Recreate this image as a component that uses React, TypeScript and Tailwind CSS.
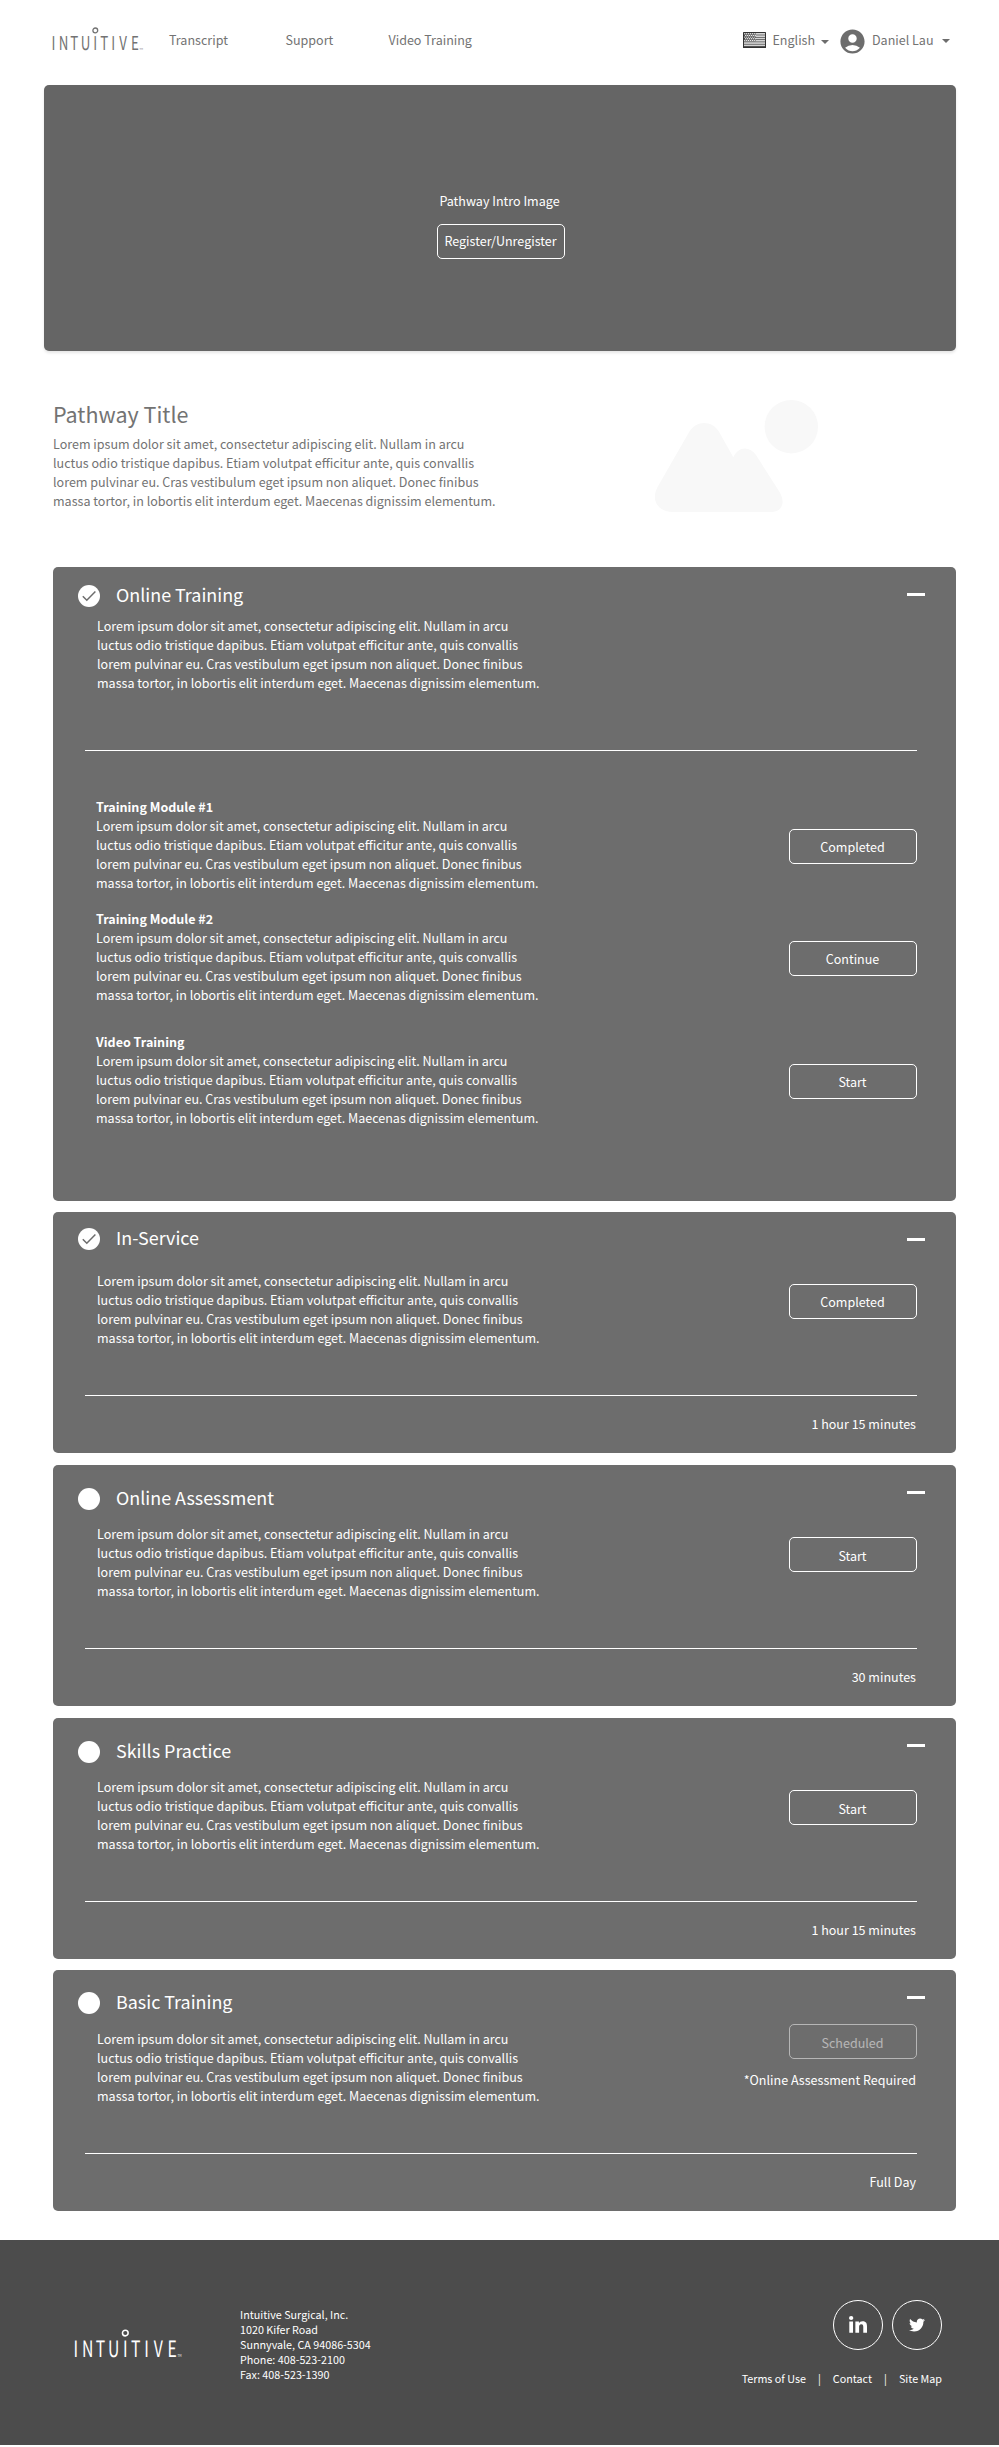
import type { ReactNode } from 'react';
import { FaLinkedinIn, FaTwitter } from 'react-icons/fa';
import { MdAccountCircle } from 'react-icons/md';

const LOGO_LETTERS: [string, number][] = [
  ['I', 1.5],
  ['N', 11.5],
  ['T', 22.2],
  ['U', 33.5],
  ['I', 43.2],
  ['T', 52.2],
  ['I', 61.2],
  ['V', 71.2],
  ['E', 82.9],
];

function Logo({ className }: { className: string }) {
  return (
    <svg viewBox="0 0 92 24" className={className} fill="currentColor" overflow="visible">
      <circle cx="43.3" cy="3.4" r="2.4" fill="none" stroke="currentColor" strokeWidth="1.3" />
      {LOGO_LETTERS.map(([letter, x], i) => (
        <text
          key={i}
          transform={`translate(${x} 23.4) scale(0.7 1)`}
          textAnchor="middle"
          fontSize="19"
          className="font-normal"
          textRendering="geometricPrecision"
        >
          {letter}
        </text>
      ))}
      <text x="89.2" y="23.4" textAnchor="middle" fontSize="2.4">
        TM
      </text>
    </svg>
  );
}

function Flag() {
  return (
    <svg viewBox="0 0 23 16" className="h-4 w-[23px]">
      <rect width="23" height="16" rx="0.6" fill="#333333" />
      {[1, 3.3, 5.6, 7.9, 10.2, 12.5].map((y) => (
        <rect key={y} x="1" y={y} width="21" height="1.7" fill="#d4d4d4" />
      ))}
      <rect x="1" y="1" width="11.5" height="8.2" fill="#4a4a4a" />
      {[0, 1, 2, 3, 4].map((row) =>
        [0, 1, 2, 3, 4, 5].map((col) => (
          <circle
            key={`${row}-${col}`}
            cx={1.8 + col * 1.9 + (row % 2) * 0.95}
            cy={1.8 + row * 1.65}
            r="0.72"
            fill="#ececec"
          />
        )),
      )}
    </svg>
  );
}

function Caret({ className }: { className: string }) {
  return (
    <svg viewBox="0 0 8 4" className={`h-1 w-2 ${className}`} fill="#6d6d6d">
      <path d="M0 0h8L4 4z" />
    </svg>
  );
}

function Lorem() {
  return (
    <p className="whitespace-nowrap">
      Lorem ipsum dolor sit amet, consectetur adipiscing elit. Nullam in arcu
      <br />
      luctus odio tristique dapibus. Etiam volutpat efficitur ante, quis convallis
      <br />
      lorem pulvinar eu. Cras vestibulum eget ipsum non aliquet. Donec finibus
      <br />
      massa tortor, in lobortis elit interdum eget. Maecenas dignissim elementum.
    </p>
  );
}

function Button({ children, className = '' }: { children: ReactNode; className?: string }) {
  return (
    <button
      className={`block h-[35px] w-32 shrink-0 rounded-[5px] border border-white pr-px text-center leading-[19px] ${className}`}
    >
      {children}
    </button>
  );
}

type CardProps = {
  title: string;
  done?: boolean;
  className: string;
  headerClass: string;
  minusClass: string;
  bodyClass: string;
  action?: ReactNode;
  children: ReactNode;
};

function Card({ title, done, className, headerClass, minusClass, bodyClass, action, children }: CardProps) {
  return (
    <section className={`ml-[53px] w-[903px] rounded-[5px] bg-[#6d6d6d] text-white ${className}`}>
      <div className={`flex items-start pr-[31px] pl-[25px] ${headerClass}`}>
        <svg viewBox="0 0 22 22" className="mt-1 h-[22px] w-[22px]">
          <circle cx="11" cy="11" r="11" fill="#ffffff" />
          {done && <path d="M4.8 11.2l4 4.1 8.6-8.8" fill="none" stroke="#6d6d6d" strokeWidth="1.5" />}
        </svg>
        <h2 className="ml-4 grow text-[17.91px] leading-[26px]">{title}</h2>
        <div className={`h-[3px] w-[18px] bg-white ${minusClass}`} />
      </div>
      <div className={`flex items-start justify-between pr-[39px] pl-[44px] ${bodyClass}`}>
        <Lorem />
        {action}
      </div>
      <div className="mr-[39px] ml-8 h-px bg-white" />
      {children}
    </section>
  );
}

function Duration({ children }: { children: ReactNode }) {
  return <p className="mt-[18px] mr-10 text-right">{children}</p>;
}

function Module({ title, action, className }: { title: string; action: string; className: string }) {
  return (
    <div className={`flex items-start justify-between pr-[39px] pl-[43px] ${className}`}>
      <div>
        <h3 className="font-bold">{title}</h3>
        <Lorem />
      </div>
      <Button className="mt-8">{action}</Button>
    </div>
  );
}

export default function App() {
  return (
    <div className="h-[2447px] w-[999px] overflow-hidden bg-white font-['Noto_Sans_CJK_SC',sans-serif] text-[12.54px] leading-[19px] text-[#737373]">
      <header className="flex h-[85px] items-start pt-[30px]">
        <Logo className="-mt-[3px] ml-[52.3px] h-6 w-[92px] shrink-0" />
        <nav className="ml-[24.7px] flex">
          <a className="w-[116.5px]">Transcript</a>
          <a className="w-[103px]">Support</a>
          <a className="w-[354.5px]">Video Training</a>
        </nav>
        <div className="mt-[2px]">
          <Flag />
        </div>
        <span className="ml-[6.5px] w-[48.5px]">English</span>
        <Caret className="mt-[10px]" />
        <MdAccountCircle className="-mt-[3.5px] ml-[9.5px] h-[29px] w-[29px] text-[#6d6d6d]" />
        <span className="ml-[4.5px] w-[70px] whitespace-nowrap">Daniel Lau</span>
        <Caret className="mt-[9px]" />
      </header>

      <section className="ml-11 flex h-[266px] w-[912px] flex-col items-center rounded-[5px] bg-[#656565] pt-[106px] text-white shadow-[0_2px_3px_rgba(0,0,0,0.1)]">
        <p className="-ml-px">Pathway Intro Image</p>
        <Button className="mt-[14px] ml-[2px] whitespace-nowrap px-0 pb-[2px]">Register/Unregister</Button>
      </section>

      <section className="flex h-[216px] items-start pt-[47px] pl-[53px]">
        <div className="w-[601px]">
          <h1 className="text-[21.49px] leading-[31px]">Pathway Title</h1>
          <div className="mt-[5px]">
            <Lorem />
          </div>
        </div>
        <svg viewBox="0 0 164 112" className="mt-[2px] h-28 w-[164px]" fill="#f8f8f8">
          <circle cx="137.3" cy="26.7" r="26.7" />
          <path d="M19 112C5 112-4 101 3.7 86.7L35 32.3C42.5 20 58 20 65.3 32.3L79.3 57.3C84 46 96 46 102 55L126 92.7C132 104 127 112 117 112Z" />
        </svg>
      </section>

      <Card
        title="Online Training"
        done
        className="h-[634px]"
        headerClass="pt-[14px]"
        minusClass="mt-3"
        bodyClass="mt-[9px] h-[134px]"
      >
        <Module title="Training Module #1" action="Completed" className="mt-[46px]" />
        <Module title="Training Module #2" action="Continue" className="mt-[17px]" />
        <Module title="Video Training" action="Start" className="mt-7" />
      </Card>

      <Card
        title="In-Service"
        done
        className="mt-[11px] h-[241px]"
        headerClass="pt-3"
        minusClass="mt-[14px]"
        bodyClass="mt-[21px] h-[124px]"
        action={<Button className="mt-[13px]">Completed</Button>}
      >
        <Duration>1 hour 15 minutes</Duration>
      </Card>

      <Card
        title="Online Assessment"
        className="mt-3 h-[241px]"
        headerClass="pt-[19px]"
        minusClass="mt-[7px]"
        bodyClass="mt-[14px] h-[124px]"
        action={<Button className="mt-[13px] pt-[2px]">Start</Button>}
      >
        <Duration>30 minutes</Duration>
      </Card>

      <Card
        title="Skills Practice"
        className="mt-3 h-[241px]"
        headerClass="pt-[19px]"
        minusClass="mt-[7px]"
        bodyClass="mt-[14px] h-[124px]"
        action={<Button className="mt-[13px] pt-[2px]">Start</Button>}
      >
        <Duration>1 hour 15 minutes</Duration>
      </Card>

      <Card
        title="Basic Training"
        className="mt-[11px] h-[241px]"
        headerClass="pt-[18px]"
        minusClass="mt-2"
        bodyClass="mt-[15px] h-[124px]"
        action={
          <div className="-mt-[5px] flex flex-col items-end">
            <Button className="pt-[2px] opacity-50">Scheduled</Button>
            <p className="mt-[11px] mr-px">*Online Assessment Required</p>
          </div>
        }
      >
        <Duration>Full Day</Duration>
      </Card>

      <footer className="mt-[29px] flex h-[205px] items-start bg-[#4c4c4c] text-[10.75px] leading-[15px] text-white">
        <Logo className="mt-[88.5px] ml-[74px] h-[28.4px] w-[109px] shrink-0" />
        <address className="mt-[67px] ml-[57px] w-[501px] not-italic">
          Intuitive Surgical, Inc.
          <br />
          1020 Kifer Road
          <br />
          Sunnyvale, CA 94086-5304
          <br />
          Phone: 408-523-2100
          <br />
          Fax: 408-523-1390
        </address>
        <div className="mt-[60px] flex w-[201px] flex-col items-end">
          <div className="flex gap-[9px]">
            <a className="flex h-[50px] w-[50px] items-center justify-center rounded-full border border-white">
              <FaLinkedinIn preserveAspectRatio="none" className="h-[19px] w-[18px]" />
            </a>
            <a className="flex h-[50px] w-[50px] items-center justify-center rounded-full border border-white">
              <FaTwitter className="h-4 w-4" />
            </a>
          </div>
          <div className="mt-[21px] flex gap-3 whitespace-nowrap">
            <a>Terms of Use</a>
            <span>|</span>
            <a>Contact</a>
            <span>|</span>
            <a>Site Map</a>
          </div>
        </div>
      </footer>
    </div>
  );
}
